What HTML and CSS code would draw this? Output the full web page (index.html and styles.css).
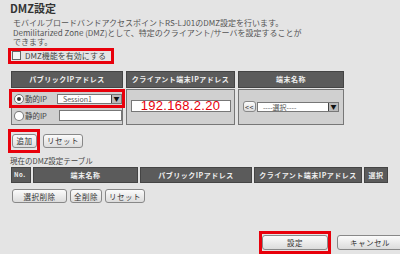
FILE: index.html
```html
<!DOCTYPE html>
<html lang="ja">
<head>
    <meta charset="UTF-8">
    <title>DMZ設定</title>
    <link rel="stylesheet" href="styles.css">
</head>
<body>
<div class="page">
    <h1>DMZ設定</h1>
    <p class="desc">モバイルブロードバンドアクセスポイントRS-LJ01のDMZ設定を行います。<br>
        Demilitarized Zone (DMZ)として、特定のクライアント/サーバを設定することが<br>
        できます。</p>
    <label class="enable hl"><span class="check"></span>DMZ機能を有効にする</label>

    <div class="entry">
        <div class="th">パブリックIPアドレス</div>
        <div class="th">クライアント端末IPアドレス</div>
        <div class="th">端末名称</div>
        <div class="td ipcell">
            <div class="iprow hl">
                <span class="radio on"></span><span class="lbl">動的IP</span>
                <span class="select sel-session">Session1<span class="arrow">▼</span></span>
            </div>
            <div class="iprow">
                <span class="radio"></span><span class="lbl">静的IP</span>
                <span class="textbox"></span>
            </div>
        </div>
        <div class="td center">
            <span class="textbox client">192.168.2.20</span>
        </div>
        <div class="td center">
            <span class="btn small">&lt;&lt;</span>
            <span class="select sel-name">----選択----<span class="arrow">▼</span></span>
        </div>
    </div>

    <div class="btnrow addrow">
        <span class="mark add-mark"><span class="btn add">追加</span></span>
        <span class="btn">リセット</span>
    </div>

    <div class="caption">現在のDMZ設定テーブル</div>
    <div class="list">
        <div class="th no">No.</div>
        <div class="th">端末名称</div>
        <div class="th">パブリックIPアドレス</div>
        <div class="th">クライアント端末IPアドレス</div>
        <div class="th">選択</div>
    </div>
    <div class="btnrow list-btns">
        <span class="btn wide">選択削除</span>
        <span class="btn">全削除</span>
        <span class="btn">リセット</span>
    </div>

    <div class="footer">
        <span class="mark foot-mark"><span class="btn foot">設定</span></span>
        <span class="btn foot">キャンセル</span>
    </div>
</div>
</body>
</html>
```

FILE: styles.css
```css
body {
    margin: 0;
    background-color: #e4e4e4;
    font-family: "Noto Sans CJK JP", "DejaVu Sans", sans-serif;
    color: #444;
}
.page {
    padding: 1px 0 0 10px;
    width: 390px;
    height: 253px;
    display: flex;
    flex-direction: column;
    align-items: flex-start;
}
h1 {
    font-size: 11px;
    font-weight: bold;
    margin: 0;
    line-height: 15px;
    color: #333;
}
.desc {
    font-size: 8px;
    line-height: 9.5px;
    margin: 2px 0 0 3px;
    color: #555;
}
.hl {
    outline: 3px solid #e8000b;
}
.mark {
    display: inline-flex;
    border: 3px solid #e8000b;
}
.enable {
    display: flex;
    align-items: center;
    gap: 4px;
    font-size: 8px;
    margin: 4px 0 0 1px;
    padding: 1px 5px 1px 1px;
    height: 8px;
    color: #444;
}
.check {
    width: 7px;
    height: 7px;
    border: 1px solid #666;
    background: #f3f3f3;
}
.entry {
    display: grid;
    grid-template-columns: 112px 109px 106px;
    grid-template-rows: 17px 36px;
    column-gap: 3px;
    row-gap: 1px;
    margin: 10px 0 0 1px;
}
.th {
    background-color: #5b5b5b;
    border: 1px solid #444;
    color: #f0f0f0;
    font-size: 7px;
    font-weight: bold;
    display: flex;
    align-items: center;
    justify-content: center;
    letter-spacing: 0.5px;
}
.td {
    background-color: #d0d0d0;
    border: 1px solid #777;
    display: flex;
    align-items: center;
}
.center {
    justify-content: center;
}
.ipcell {
    flex-direction: column;
    align-items: stretch;
    justify-content: center;
    gap: 4px;
    padding-top: 1px;
}
.iprow {
    display: flex;
    align-items: center;
    height: 13px;
    padding-left: 2px;
}
.radio {
    width: 8px;
    height: 8px;
    border: 1px solid #777;
    border-radius: 50%;
    background: #fff;
    display: flex;
    align-items: center;
    justify-content: center;
}
.radio.on::after {
    content: "";
    width: 4px;
    height: 4px;
    border-radius: 50%;
    background: #333;
}
.lbl {
    font-size: 7.5px;
    margin-left: 1px;
    width: 32px;
    color: #444;
}
.select {
    position: relative;
    background: #fff;
    border: 1px solid #777;
    height: 8px;
    font-size: 7px;
    line-height: 8px;
    padding-left: 5px;
    color: #555;
}
.sel-session {
    width: 58px;
}
.sel-name {
    width: 75px;
}
.arrow {
    position: absolute;
    right: 0;
    top: 0;
    width: 9px;
    height: 8px;
    background: #bbb;
    color: #111;
    font-size: 6px;
    text-align: center;
    line-height: 8px;
    border-left: 1px solid #444;
}
.textbox {
    background: #fff;
    border: 1px solid #777;
    width: 62px;
    height: 9px;
    margin-left: 2px;
}
.client {
    width: 98px;
    height: 10px;
    margin: -1px 0 0 0;
    font-family: "Liberation Sans", sans-serif;
    font-size: 13px;
    line-height: 10px;
    color: #e8000b;
    text-align: center;
    letter-spacing: 0.3px;
}
.btn {
    display: inline-flex;
    align-items: center;
    justify-content: center;
    height: 12px;
    padding: 0 3px;
    font-size: 7.5px;
    color: #333;
    background: linear-gradient(#fbfbfb, #dcdcdc);
    border: 1px solid #888;
    border-radius: 3px;
    letter-spacing: 0.5px;
}
.small {
    height: 9px;
    padding: 0 1px;
    font-size: 7px;
    margin-right: 1px;
}
.btnrow {
    display: flex;
    align-items: center;
    gap: 3px;
    margin: 8px 0 0 2px;
}
.addrow {
    margin: 4px 0 0 -2px;
}
.add-mark {
    padding: 2px 0 2px 1px;
}
.add {
    width: 17px;
}
.caption {
    font-size: 7.5px;
    margin-top: 2px;
    color: #444;
}
.list {
    display: grid;
    grid-template-columns: 20px 105px 112px 108px 24px;
    column-gap: 2px;
    height: 18px;
    margin: 1px 0 0 1px;
}
.list .th {
    font-size: 7px;
}
.list .no {
    justify-content: flex-start;
    padding-left: 2px;
    font-size: 6px;
}
.list-btns {
    margin-top: 6px;
}
.wide {
    width: 47px;
}
.footer {
    display: flex;
    align-items: center;
    gap: 6px;
    margin: 28px 0 0 249px;
}
.foot-mark {
    padding: 1px 0;
}
.foot {
    width: 58px;
    height: 13px;
}
```
